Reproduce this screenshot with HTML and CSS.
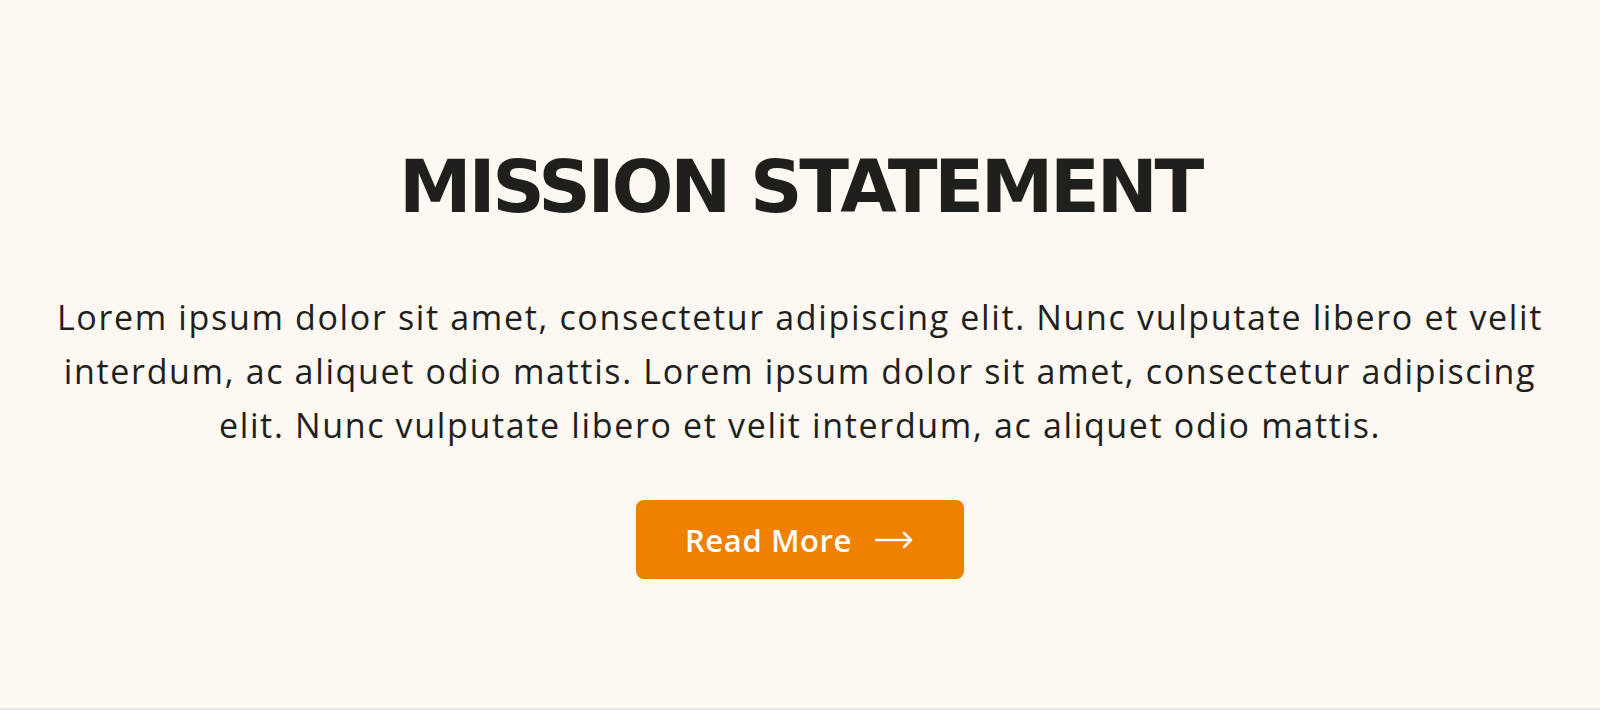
FILE: index.html
```html
<!DOCTYPE html>
<html lang="en">
<head>
<meta charset="utf-8">
<title>Mission Statement</title>
<link rel="stylesheet" href="styles.css">
</head>
<body>
<section class="mission">
  <h2 class="mission-title">MISSION STATEMENT</h2>
  <p class="mission-text">Lorem ipsum dolor sit amet, consectetur adipiscing elit. Nunc vulputate libero et velit interdum, ac aliquet odio mattis. Lorem ipsum dolor sit amet, consectetur adipiscing elit. Nunc vulputate libero et velit interdum, ac aliquet odio mattis.</p>
  <a class="btn" href="#">
    <span class="btn-label">Read More</span>
    <svg class="btn-arrow" width="40" height="20" viewBox="0 0 40 20" aria-hidden="true">
      <path d="M2 10 H37 M30 3 L37 10 L30 17" fill="none" stroke="#fff" stroke-width="2.5" stroke-linecap="round" stroke-linejoin="round"/>
    </svg>
  </a>
</section>
</body>
</html>
```

FILE: styles.css
```css
* { box-sizing: border-box; }

html, body {
  margin: 0;
  padding: 0;
  background: #fdf8f2;
}

.mission {
  height: 710px;
  padding-top: 150px;
  display: flex;
  flex-direction: column;
  align-items: center;
  background: #fdf8f2;
  border-bottom: 2px solid #ebe6e0;
}

.mission-title {
  margin: 0;
  font-family: "DejaVu Sans", sans-serif;
  font-weight: 700;
  font-size: 73px;
  line-height: 1;
  letter-spacing: -3.3px;
  color: #211f1c;
}

.mission-text {
  margin: 67px 0 0;
  max-width: 1500px;
  text-align: center;
  font-family: "Open Sans", sans-serif;
  font-weight: 400;
  font-size: 34px;
  line-height: 54px;
  letter-spacing: 1.65px;
  color: #211f1c;
}

.btn {
  margin-top: 48px;
  height: 79px;
  padding: 0 50px 0 49px;
  display: flex;
  align-items: center;
  gap: 22px;
  background: #f08000;
  border-radius: 8px;
  text-decoration: none;
  color: #fff;
  font-family: "Open Sans", sans-serif;
  font-weight: 600;
  font-size: 31px;
  letter-spacing: 0.6px;
}

.btn-arrow {
  display: block;
}
```
